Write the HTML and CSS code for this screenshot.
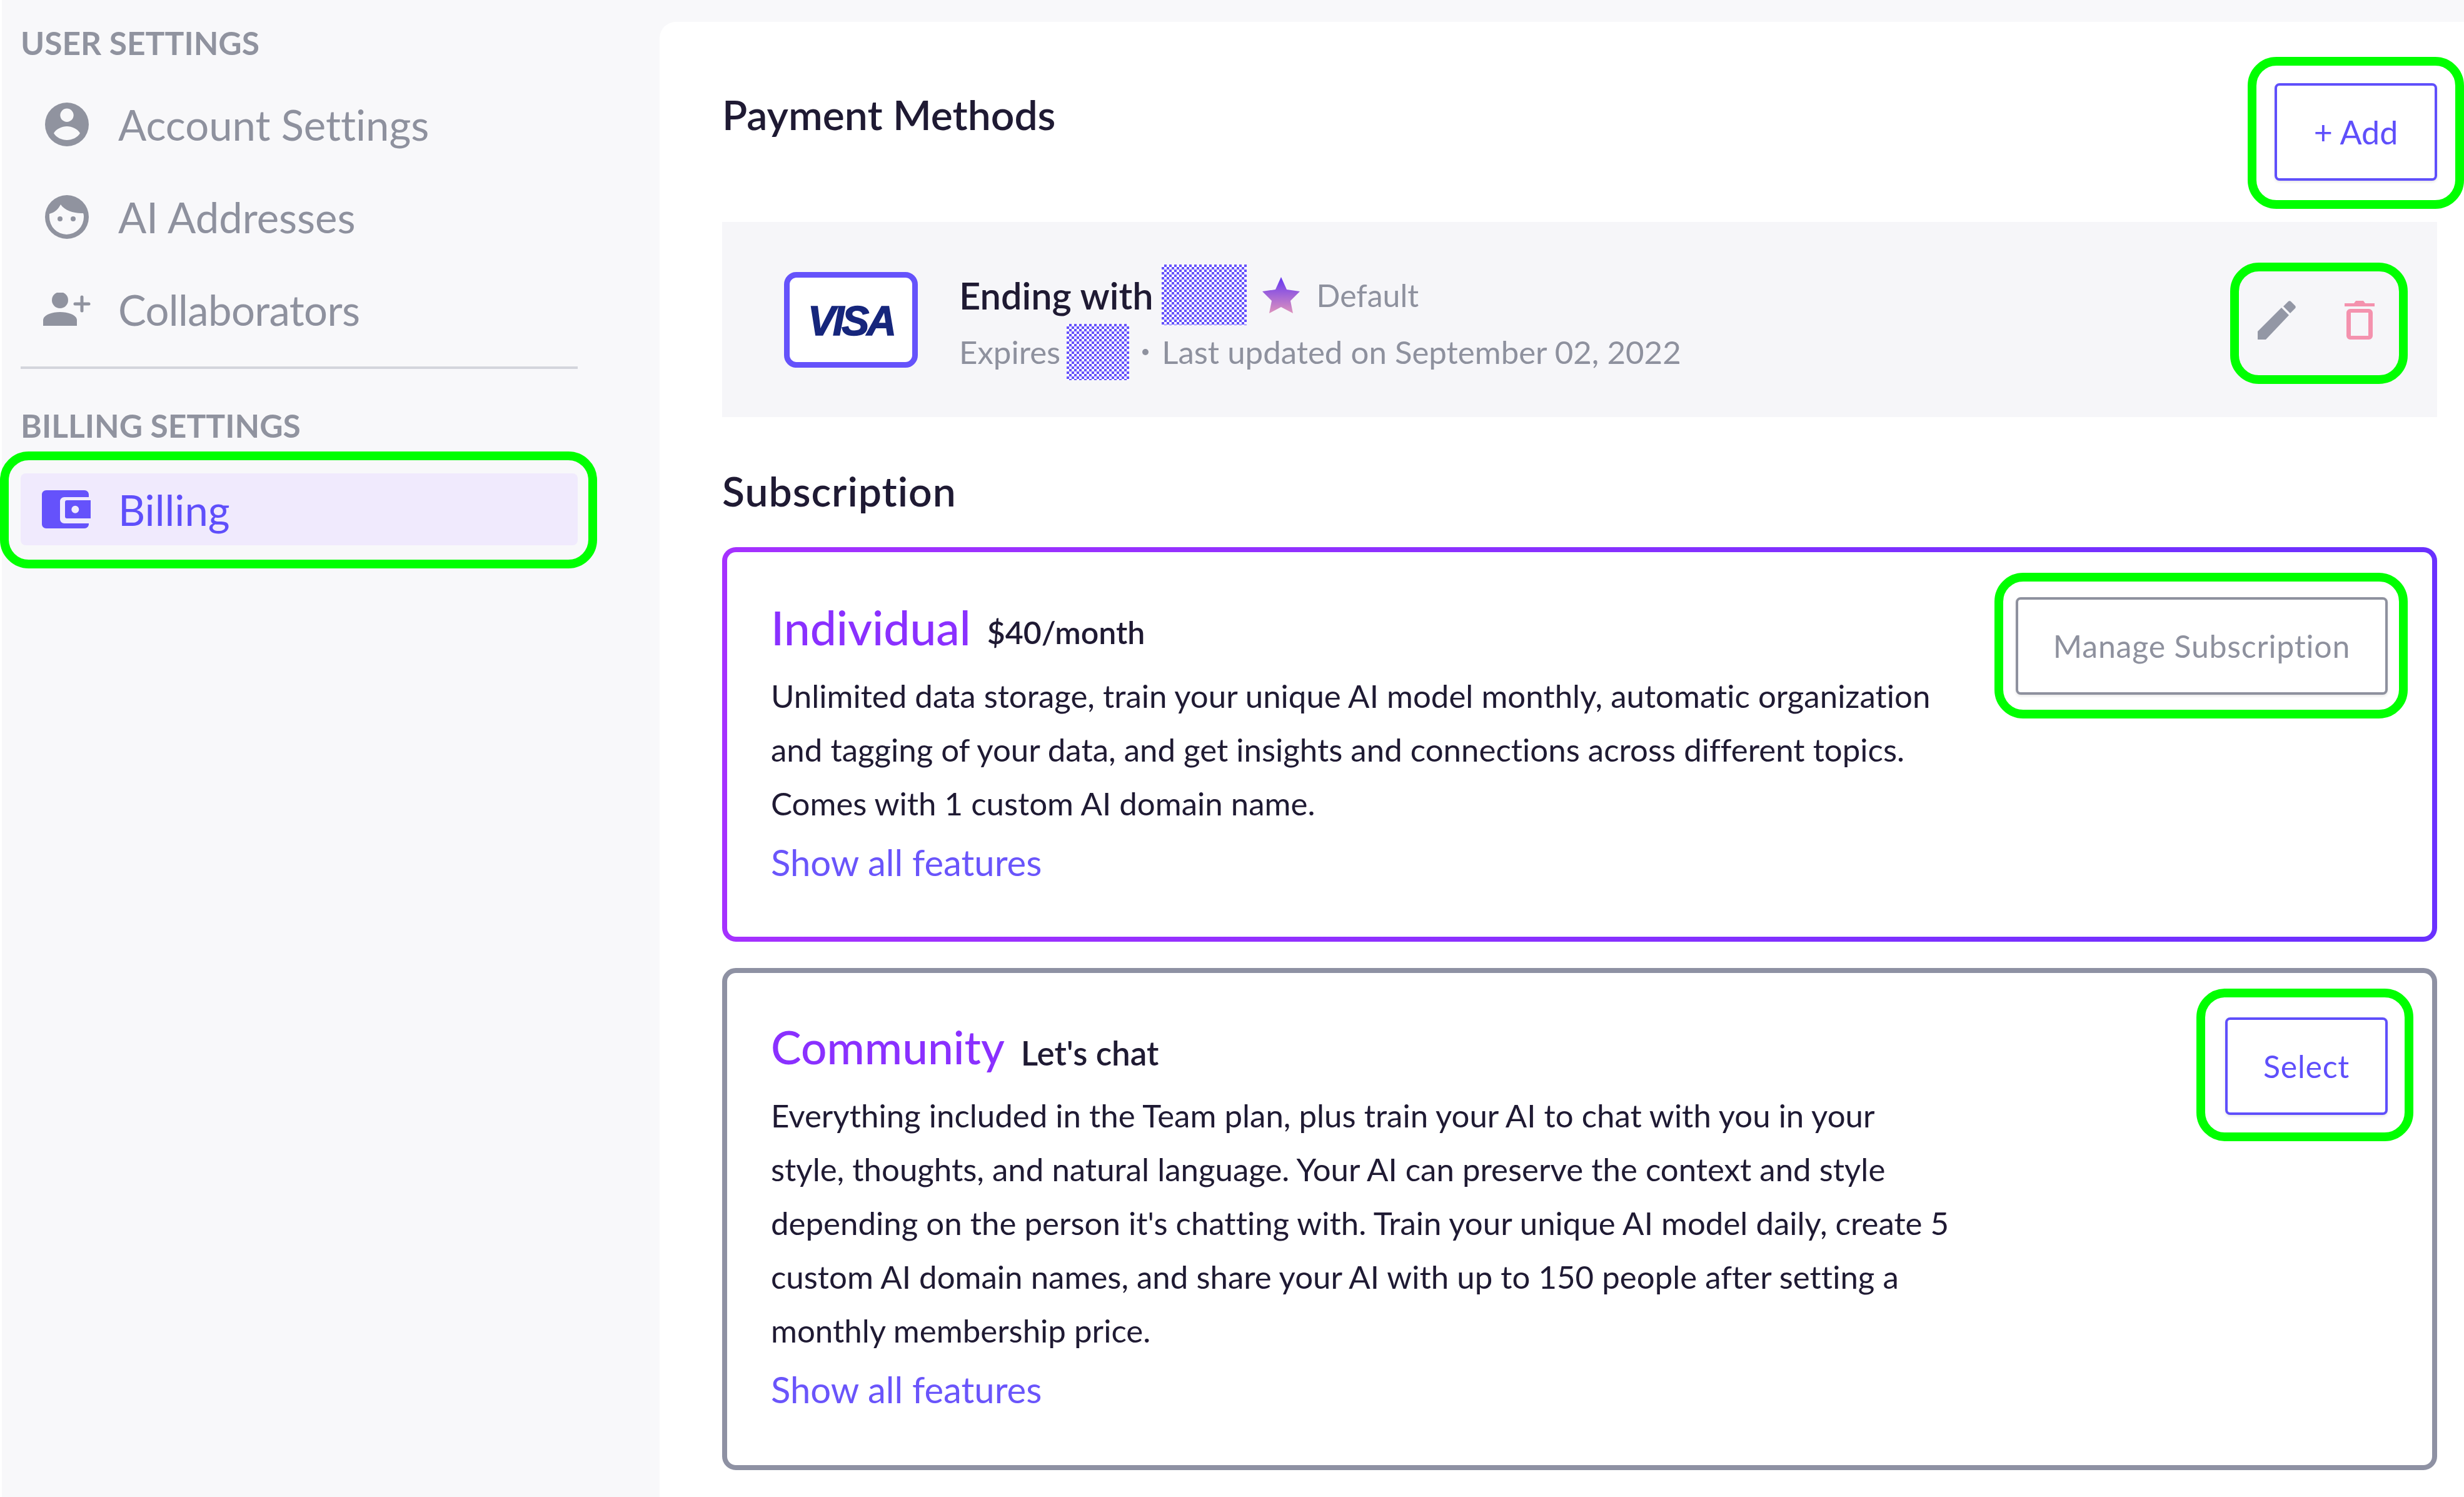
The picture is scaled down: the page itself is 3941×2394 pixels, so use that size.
FILE: index.html
```html
<!DOCTYPE html>
<html>
<head>
    <title>Billing</title>
    <link rel="stylesheet" href="styles.css">
</head>
<body>
    <aside class="sidebar">
        <h4 class="side-title">USER SETTINGS</h4>
        <div class="side-list">
            <a class="side-item">
                <svg class="side-icon" viewBox="0 0 70 70"><path fill-rule="evenodd" d="M35 0a35 35 0 1 0 0 70a35 35 0 1 0 0-70zM35 9.500a10.700 10.700 0 1 1 0 21.400a10.700 10.700 0 1 1 0-21.400zM14 49c4-7 13-11 21-11s17 4 21 11c-4 7-13 11-21 11s-17-4-21-11z"/></svg>
                Account Settings
            </a>
            <a class="side-item">
                <svg class="side-icon" viewBox="0 0 70 70"><path fill-rule="evenodd" d="M35 0a35 35 0 1 0 0 70a35 35 0 1 0 0-70zM7 30c8-2 14-7 18-15c6 9 20 14 33 14l3 0c1 2 1 4 1 6a27.500 28 0 0 1-55 0c0-2 0-3 0-5z"/><circle cx="24" cy="38" r="4"/><circle cx="45" cy="38" r="4"/></svg>
                AI Addresses
            </a>
            <a class="side-item tight">
                <svg class="side-icon wide" viewBox="0 0 76 54"><circle cx="27" cy="12" r="13"/><path d="M0 53V44C0 36 13 31 27 31s27 5 27 13v9z"/><rect x="59.500" y="4.500" width="5" height="27" rx="2.500"/><rect x="48.500" y="15.500" width="27" height="5" rx="2.500"/></svg>
                Collaborators
            </a>
        </div>
        <hr class="side-line">
        <h4 class="side-title">BILLING SETTINGS</h4>
        <a class="side-item active ring ring-billing">
            <svg class="side-icon wallet" viewBox="0 0 78 61"><path d="M7 0h61c4 0 7 3 7 7v4H36c-4 0-7 3-7 7v28c0 4 3 7 7 7h39v1c0 4-3 7-7 7H7c-4 0-7-3-7-7V7c0-4 3-7 7-7z"/><path fill-rule="evenodd" d="M40 16h38v29H40c-2 0-3-1-3-3V19c0-2 1-3 3-3zM53.300 24.700a6 6 0 1 0 0 12a6 6 0 1 0 0-12z"/></svg>
            Billing
        </a>
    </aside>

    <main class="content">
        <div class="pay-head">
            <h2 class="section-title">Payment Methods</h2>
            <button class="btn btn-add ring ring-add">+ Add</button>
        </div>

        <div class="pay-card">
            <div class="visa"><span>VISA</span></div>
            <div class="pay-info">
                <div class="pay-line">
                    <span class="pay-name">Ending with</span>
                    <span class="masked masked-a"></span>
                    <svg class="star" viewBox="0 0 60 58">
                        <defs><linearGradient id="star-fill" x1="0" y1="0" x2="0" y2="1"><stop offset="0" stop-color="#6536f2"/><stop offset="1" stop-color="#de93bd"/></linearGradient></defs>
                        <path fill="url(#star-fill)" d="M30 0l9 20 21 3-15 15 4 20-19-10-19 10 4-20L0 23l21-3z"/>
                    </svg>
                    <span class="pay-default">Default</span>
                </div>
                <div class="pay-line sub">
                    <span>Expires</span>
                    <span class="masked masked-b"></span>
                    <span class="dot"></span>
                    <span>Last updated on September 02, 2022</span>
                </div>
            </div>
            <div class="pay-actions ring ring-actions">
                <svg class="pencil" viewBox="0 0 62 63"><path d="M0 50L38 12l12 12L13 63H0z"/><path d="M41 10l8-8c1-1 3-1 4 0l7 7c1 1 1 3 0 4l-8 8z"/></svg>
                <svg class="trash" viewBox="0 0 48 63"><path d="M0 5h15l3-4h12l3 4h15v5H0z"/><path fill-rule="evenodd" d="M9 14h30c3 0 6 3 6 6v37c0 3-3 6-6 6H9c-3 0-6-3-6-6V20c0-3 3-6 6-6zM10 20v37h28V20z"/></svg>
            </div>
        </div>

        <h2 class="section-title sub-title">Subscription</h2>

        <section class="plan current">
            <div class="plan-body">
                <div class="plan-head">
                    <span class="plan-name">Individual</span>
                    <span class="plan-price">$40/month</span>
                </div>
                <p class="plan-text">Unlimited data storage, train your unique AI model monthly, automatic organization<br>and tagging of your data, and get insights and connections across different topics.<br>Comes with 1 custom AI domain name.</p>
                <a class="plan-link">Show all features</a>
            </div>
            <button class="btn btn-gray btn-manage ring ring-manage">Manage Subscription</button>
        </section>

        <section class="plan community">
            <div class="plan-body">
                <div class="plan-head">
                    <span class="plan-name">Community</span>
                    <span class="plan-price">Let's chat</span>
                </div>
                <p class="plan-text">Everything included in the Team plan, plus train your AI to chat with you in your<br>style, thoughts, and natural language. Your AI can preserve the context and style<br>depending on the person it's chatting with. Train your unique AI model daily, create 5<br>custom AI domain names, and share your AI with up to 150 people after setting a<br>monthly membership price.</p>
                <a class="plan-link">Show all features</a>
            </div>
            <button class="btn btn-select ring ring-select">Select</button>
        </section>
    </main>
</body>
</html>
```

FILE: styles.css
```css
* {
    box-sizing: border-box;
}
body {
    font-family: Lato, "Noto Sans", sans-serif;
    font-variant-ligatures: none;
    display: flex;
    width: 3941px;
    height: 2394px;
    margin: 0;
    overflow: hidden;
    background-color: #f8f8fa;
    color: #1f1a33;
}

/* green marker rings */
.ring {
    position: relative;
}
.ring::after {
    content: "";
    position: absolute;
    border: 14px solid #00ff00;
    border-radius: 46px;
    pointer-events: none;
}
.ring-billing::after { top: -35px; bottom: -37px; left: -33px; right: -31px; }
.ring-add::after { top: -46px; bottom: -49px; left: -47px; right: -47px; }
.ring-actions::after { top: -60px; bottom: -71px; left: -44px; right: -53px; }
.ring-manage::after { top: -43px; bottom: -42px; left: -38px; right: -36px; }
.ring-select::after { top: -50px; bottom: -46px; left: -50px; right: -45px; }

/* sidebar */
.sidebar {
    flex: 0 0 1055px;
    padding: 0 131px 0 30px;
    border-left: 3px solid #fff;
}
.side-title {
    margin: 0;
    padding-top: 38px;
    font-size: 51.5px;
    font-weight: 700;
    line-height: 60px;
    color: #90939f;
}
.side-list {
    margin-top: 27px;
}
.side-item {
    display: flex;
    align-items: center;
    gap: 47px;
    height: 148px;
    padding-left: 39px;
    font-size: 67px;
    line-height: 78px;
    color: #8e919e;
}
.side-item.tight {
    letter-spacing: -0.6px;
}
.side-icon {
    flex: 0 0 70px;
    width: 70px;
    height: 70px;
    fill: #90939f;
}
.side-icon.wide {
    flex-basis: 76px;
    width: 76px;
    height: 54px;
    margin-left: -3px;
    margin-right: -3px;
}
.side-line {
    margin: 17px 0 22px;
    border: 0;
    border-top: 4px solid #d3d5dc;
}
.side-item.active {
    height: 115px;
    margin-top: 47px;
    border-radius: 8px;
    background-color: #f0eafd;
    color: #5f4ffb;
}
.side-icon.wallet {
    flex-basis: 78px;
    width: 78px;
    height: 61px;
    margin-left: -5px;
    margin-right: -3px;
    fill: #6552fb;
}

/* main panel */
.content {
    flex: 1;
    margin-top: 35px;
    padding: 98px 43px 0 100px;
    background-color: #fff;
    border-top-left-radius: 26px;
}
.section-title {
    margin: 0;
    font-size: 66px;
    font-weight: 600;
    line-height: 80px;
}
.pay-head {
    display: flex;
    justify-content: space-between;
    align-items: flex-start;
    height: 222px;
}
.pay-head .section-title {
    padding-top: 10px;
}
.btn {
    height: 156px;
    padding: 0;
    font-family: inherit;
    font-variant-ligatures: none;
    font-size: 50px;
    letter-spacing: 0.8px;
    color: #5f4ffb;
    background-color: #fff;
    border: 4px solid #5f4ffb;
    border-radius: 8px;
    box-shadow: 0 2px 4px rgba(0,0,0,0.1);
}
.btn-add {
    width: 260px;
    font-size: 52px;
    letter-spacing: 0;
}
.btn-gray {
    color: #8e919e;
    border-color: #8e919e;
}
.btn-manage {
    flex: 0 0 595px;
}
.btn-select {
    flex: 0 0 260px;
}

/* card on file */
.pay-card {
    display: flex;
    align-items: center;
    height: 312px;
    padding: 0 100px 0 99px;
    background-color: #f6f6f9;
}
.visa {
    display: flex;
    justify-content: center;
    align-items: center;
    flex: 0 0 214px;
    height: 153px;
    padding-top: 4px;
    background-color: #fff;
    border: 9px solid #6552fb;
    border-radius: 20px;
}
.visa span {
    font-family: "Liberation Sans", sans-serif;
    font-size: 66px;
    font-weight: 700;
    font-style: italic;
    letter-spacing: -4px;
    color: #16267c;
    -webkit-text-stroke: 1.5px #16267c;
}
.pay-info {
    flex: 1;
    margin: 12px 0 0 66px;
}
.pay-line {
    display: flex;
    align-items: center;
    height: 91px;
}
.pay-name {
    font-size: 59.5px;
    font-weight: 600;
}
.masked {
    flex: none;
    background-color: #fff;
    background-image: conic-gradient(#6552fb 25%, transparent 0 50%, #6552fb 0 75%, transparent 0);
    background-size: 8px 8px;
}
.masked-a {
    width: 136px;
    height: 97px;
    margin-left: 13px;
}
.star {
    width: 60px;
    height: 58px;
    margin-left: 25px;
}
.pay-default {
    margin-left: 27px;
    font-size: 50px;
    color: #8e919e;
}
.sub {
    font-size: 51px;
    color: #8e919e;
}
.masked-b {
    width: 100px;
    height: 90px;
    margin-left: 10px;
}
.dot {
    width: 10px;
    height: 10px;
    margin: 0 21px;
    border-radius: 50%;
    background-color: #8e919e;
}
.pay-actions {
    display: flex;
    align-items: center;
    gap: 77px;
}
.pencil {
    width: 62px;
    height: 63px;
    fill: #9397a5;
}
.trash {
    width: 48px;
    height: 63px;
    fill: #f492ae;
}

/* plans */
.sub-title {
    margin-top: 78px;
    margin-bottom: 50px;
    letter-spacing: 1px;
}
.plan {
    display: flex;
    justify-content: space-between;
    align-items: flex-start;
    padding: 72px 71px 0 70px;
    border: 8px solid #8e91a3;
    border-radius: 22px;
    background-color: #fff;
}
.plan.current {
    height: 631px;
    border-color: transparent;
    background: linear-gradient(#fff, #fff) padding-box, linear-gradient(90deg, #a531ff, #6a30ff) border-box;
}
.plan.community {
    height: 803px;
    margin-top: 42px;
    padding-top: 71px;
}
.plan-head {
    display: flex;
    align-items: flex-end;
    gap: 26px;
    padding-top: 3px;
}
.community .plan-head {
    padding-top: 2px;
}
.plan-name {
    font-size: 75px;
    font-weight: 500;
    line-height: 90px;
    color: #8a30ff;
}
.community .plan-name {
    font-size: 73px;
}
.plan-price {
    margin-bottom: 7px;
    font-size: 50px;
    font-weight: 600;
    line-height: 60px;
}
.community .plan-price {
    margin-bottom: 5px;
    font-size: 53px;
}
.plan-text {
    margin: 22px 0 0;
    font-size: 51px;
    line-height: 86px;
}
.plan-link {
    display: block;
    margin-top: 16px;
    font-size: 58px;
    color: #6a55fb;
}
```
